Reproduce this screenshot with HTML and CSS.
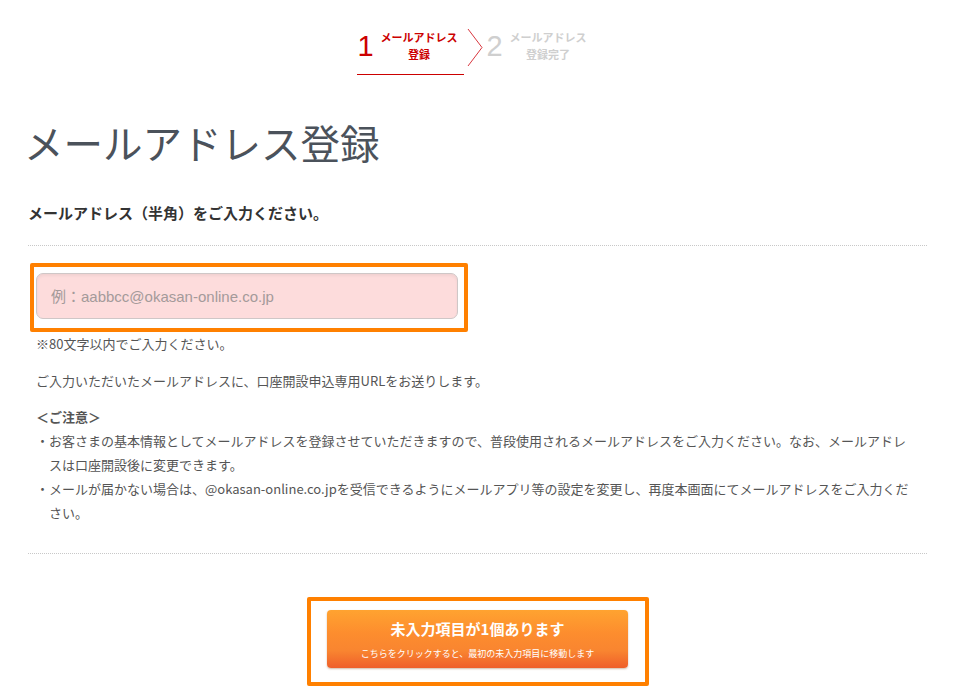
FILE: index.html
```html
<!DOCTYPE html>
<html lang="ja">
<head>
<meta charset="utf-8">
<title>メールアドレス登録</title>
<link rel="stylesheet" href="styles.css">
</head>
<body>
<div class="page">
  <div class="steps">
    <div class="step active">
      <span class="num">1</span>
      <span class="label">メールアドレス<br>登録</span>
    </div>
    <svg class="chevron" width="16" height="40" viewBox="0 0 16 40"><polyline points="1,1 15,19.5 1,38" fill="none" stroke="#d9363e" stroke-width="1"/></svg>
    <div class="step">
      <span class="num">2</span>
      <span class="label">メールアドレス<br>登録完了</span>
    </div>
  </div>

  <h1 class="title">メールアドレス登録</h1>
  <p class="lead">メールアドレス（半角）をご入力ください。</p>

  <div class="section">
    <div class="highlight field-wrap">
      <input class="email" type="text" placeholder="例：aabbcc@okasan-online.co.jp">
    </div>
    <p class="text note">※80文字以内でご入力ください。</p>
    <p class="text info">ご入力いただいたメールアドレスに、口座開設申込専用URLをお送りします。</p>
    <p class="text caution">＜ご注意＞</p>
    <ul class="bullets">
      <li>・お客さまの基本情報としてメールアドレスを登録させていただきますので、普段使用されるメールアドレスをご入力ください。なお、メールアドレスは口座開設後に変更できます。</li>
      <li>・メールが届かない場合は、@okasan-online.co.jpを受信できるようにメールアプリ等の設定を変更し、再度本画面にてメールアドレスをご入力ください。</li>
    </ul>
  </div>

  <div class="actions">
    <div class="highlight btn-wrap">
      <button class="submit" type="button">
        <span class="submit-main">未入力項目が1個あります</span>
        <span class="submit-sub">こちらをクリックすると、最初の未入力項目に移動します</span>
      </button>
    </div>
  </div>
</div>
</body>
</html>
```

FILE: styles.css
```css
* { box-sizing: border-box; }
html, body { margin: 0; padding: 0; background: #fff; }
body {
  font-family: "Noto Sans CJK JP", "Liberation Sans", sans-serif;
  color: #555;
}
.page {
  width: 899px;
  margin-left: 28px;
}
.steps {
  display: flex;
  justify-content: center;
  align-items: flex-start;
  padding-top: 28px;
  padding-right: 6px;
}
.step {
  display: flex;
  align-items: center;
  gap: 8px;
  height: 47px;
  padding: 0 6px 11px 1px;
  color: #cfcfcf;
}
.step.active {
  color: #cc0000;
  border-bottom: 1px solid #cc0000;
  padding-bottom: 10px;
}
.num {
  font-family: "Liberation Sans", Arial, sans-serif;
  font-size: 29px;
  line-height: 30px;
  width: 15px;
}
.label {
  font-size: 11px;
  font-weight: bold;
  line-height: 17px;
  text-align: center;
  display: block;
}
.chevron {
  margin: 0 4px 0 3px;
  display: block;
}
.step:not(.active) {
  padding-left: 0;
}
.title {
  margin: 43px 0 0 -4px;
  font-size: 39.5px;
  font-weight: normal;
  line-height: 48px;
  color: #4b525b;
}
.lead {
  margin: 36px 0 0;
  font-size: 15px;
  font-weight: bold;
  line-height: 22px;
  color: #333;
  padding-bottom: 21px;
}
.section {
  border-top: 1px dotted #c8c8c8;
  border-bottom: 1px dotted #c8c8c8;
  padding: 17px 13px 28px 8px;
}
.highlight {
  border: 4px solid #ff8000;
  border-radius: 2px;
}
.field-wrap {
  width: 438px;
  margin-left: -6px;
  padding: 6px 6px 9px 2px;
}
.email {
  display: block;
  width: 422px;
  height: 46px;
  border: 1px solid #cfc7c7;
  border-radius: 7px;
  background: #fddcdc;
  padding: 0 14px;
  font-family: "Liberation Sans", "Noto Sans CJK JP", sans-serif;
  font-size: 15px;
  color: #555;
  box-shadow: inset 0 2px 3px rgba(0,0,0,0.05);
  outline: none;
}
.email::placeholder { color: #a49a9a; }
.text {
  margin: 0;
  font-size: 13px;
  line-height: 24px;
}
.info { margin-top: 13px; }
.caution {
  margin-top: 12px;
  font-weight: bold;
}
.bullets {
  list-style: none;
  margin: 0;
  padding: 0 0 0 13px;
  font-size: 13px;
  line-height: 24px;
}
.bullets li {
  text-indent: -13px;
}
.actions {
  display: flex;
  justify-content: center;
  padding-top: 43px;
  padding-left: 1px;
}
.btn-wrap {
  width: 342px;
  padding: 9px 17px 14px 16px;
}
.submit {
  display: flex;
  flex-direction: column;
  align-items: center;
  width: 301px;
  height: 58px;
  border: none;
  border-radius: 4px;
  background: linear-gradient(#ffa330 0%, #fd8d2e 40%, #f98530 70%, #ef5f2a 100%);
  box-shadow: 0 1px 2px rgba(120,60,0,0.35);
  color: #fff;
  font-family: "Noto Sans CJK JP", "Liberation Sans", sans-serif;
  padding: 8px 0 0;
  cursor: pointer;
}
.submit-main {
  font-size: 15px;
  font-weight: bold;
  line-height: 22px;
}
.submit-sub {
  font-size: 9px;
  line-height: 14px;
  margin-top: 7px;
}
```
